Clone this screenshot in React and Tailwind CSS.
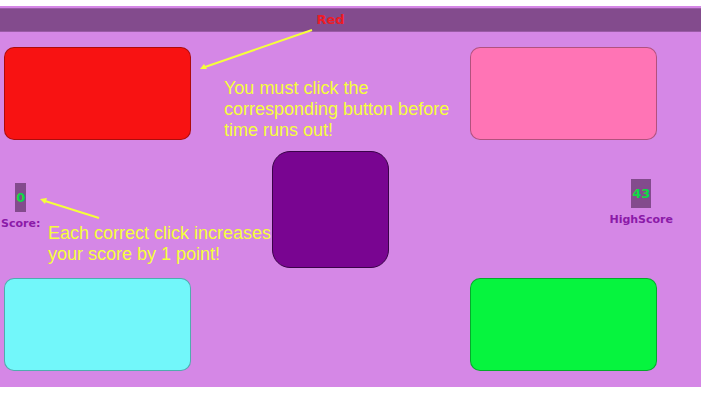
const labelFont = "font-['DejaVu_Sans',sans-serif]";

function ColorButton({ name, color }) {
  return (
    <button
      type="button"
      aria-label={name}
      className={`h-[93px] w-[187px] rounded-[10px] border border-black/30 ${color}`}
    />
  );
}

function Counter({ id, label, value, className }) {
  return (
    <div className={`flex flex-col items-center ${className}`}>
      <output
        id={id}
        className="bg-[#834b8d] px-px text-[13px] leading-[29px] font-bold text-[#0ddb45]"
      >
        {value}
      </output>
      <label htmlFor={id} className="mt-1 text-[11px] leading-4 font-bold text-[#8b1aa8]">
        {label}
      </label>
    </div>
  );
}

function Arrow({ className, width, height, line, head }) {
  return (
    <svg
      aria-hidden="true"
      className={`pointer-events-none absolute ${className}`}
      width={width}
      height={height}
      viewBox={`0 0 ${width} ${height}`}
    >
      <path d={line} stroke="#f5ff3b" strokeWidth="2" fill="none" />
      <path d={head} fill="#f5ff3b" />
    </svg>
  );
}

export default function App() {
  return (
    <div className="bg-white pt-1.5 pr-[19px] pb-[18px]">
      <main className={`relative bg-[#d587e6] pt-0.5 pb-4 ${labelFont}`}>
        <header className="flex h-6 items-center justify-center border-y border-[#9a5ba6] bg-[#834b8d] pr-10">
          <h1 className="text-[13px] leading-5 font-bold text-[#ee1c25]">Red</h1>
        </header>

        <div className="flex justify-between pt-[15px] pr-11 pl-1">
          <ColorButton name="Red" color="bg-[#f81212]" />
          <ColorButton name="Pink" color="bg-[#ff74b5]" />
        </div>

        <div className="grid grid-cols-[1fr_auto_1fr] pt-[11px] pb-2.5 pr-10">
          <Counter id="score" label="Score:" value="0" className="mt-8 ml-px justify-self-start" />
          <div className="size-[117px] rounded-[18px] border border-[#3a0448] bg-[#790591]" />
          <Counter
            id="high-score"
            label="HighScore"
            value="43"
            className="mt-7 -mr-3 justify-self-end"
          />
        </div>

        <div className="flex justify-between pr-11 pl-1">
          <ColorButton name="Cyan" color="bg-[#72f7fa]" />
          <ColorButton name="Green" color="bg-[#06f43e]" />
        </div>

        <p className="absolute top-[72px] left-[224px] w-[232px] font-['Liberation_Sans',Arial,sans-serif] text-lg leading-[21px] text-[#f5ff3b]">
          You must click the corresponding button before time runs out!
        </p>
        <p className="absolute top-[217px] left-12 w-[232px] font-['Liberation_Sans',Arial,sans-serif] text-lg leading-[21px] text-[#f5ff3b]">
          Each correct click increases your score by 1 point!
        </p>
        <Arrow
          className="top-[22px] left-[199px]"
          width={114}
          height={44}
          line="M113 2 L6 39"
          head="M1 41 L5 36 L8 41 Z"
        />
        <Arrow
          className="top-[190px] left-[39px]"
          width={62}
          height={24}
          line="M60 22 L6 5"
          head="M1 3 L8 2 L6 8 Z"
        />
      </main>
    </div>
  );
}
